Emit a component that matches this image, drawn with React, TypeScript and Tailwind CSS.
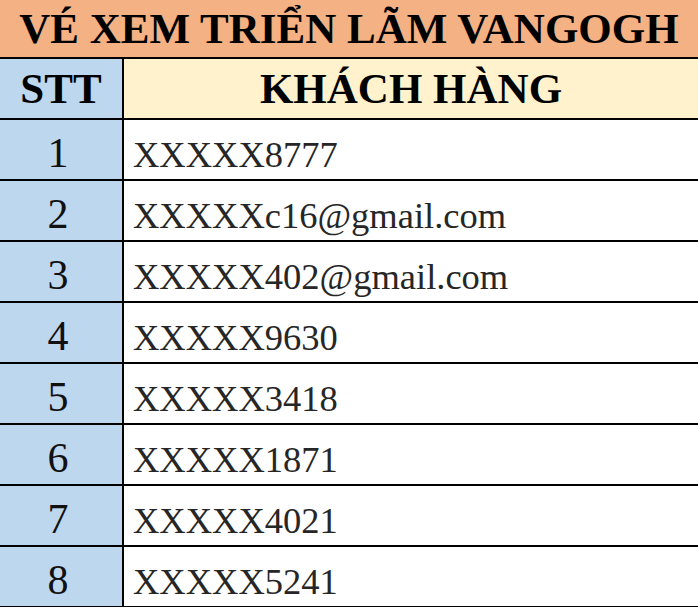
import React from 'react';

const rows = [
  { stt: 1, name: 'XXXXX8777' },
  { stt: 2, name: 'XXXXXc16@gmail.com' },
  { stt: 3, name: 'XXXXX402@gmail.com' },
  { stt: 4, name: 'XXXXX9630' },
  { stt: 5, name: 'XXXXX3418' },
  { stt: 6, name: 'XXXXX1871' },
  { stt: 7, name: 'XXXXX4021' },
  { stt: 8, name: 'XXXXX5241' },
];

export default function App() {
  return (
    <div className="w-[698px] h-[607px] overflow-hidden bg-white font-['Liberation_Serif',serif]">
      <div className="h-[59px] bg-[#F4B183] border-b-2 border-black flex items-center justify-center">
        <h1 className="text-[43px] font-bold text-black leading-none">VÉ XEM TRIỂN LÃM VANGOGH</h1>
      </div>

      <div className="h-[61px] flex border-b-2 border-black">
        <div className="w-[124px] shrink-0 bg-[#BDD7EE] border-r-2 border-black flex items-center justify-center">
          <span className="text-[43px] font-bold text-black leading-none">STT</span>
        </div>
        <div className="flex-1 bg-[#FFF2CC] flex items-center justify-center">
          <span className="text-[43px] font-bold text-black leading-none">KHÁCH HÀNG</span>
        </div>
      </div>

      {rows.map((row) => (
        <div key={row.stt} className="h-[61px] flex border-b-2 border-black">
          <div className="w-[124px] shrink-0 bg-[#BDD7EE] border-r-2 border-black flex items-center justify-center pt-[6px] pr-[6px]">
            <span className="text-[42px] text-[#111] leading-none">{row.stt}</span>
          </div>
          <div className="flex-1 bg-white flex items-center pl-[9px] pt-[12px]">
            <span className="text-[36.5px] text-[#262626] leading-none">{row.name}</span>
          </div>
        </div>
      ))}
    </div>
  );
}
